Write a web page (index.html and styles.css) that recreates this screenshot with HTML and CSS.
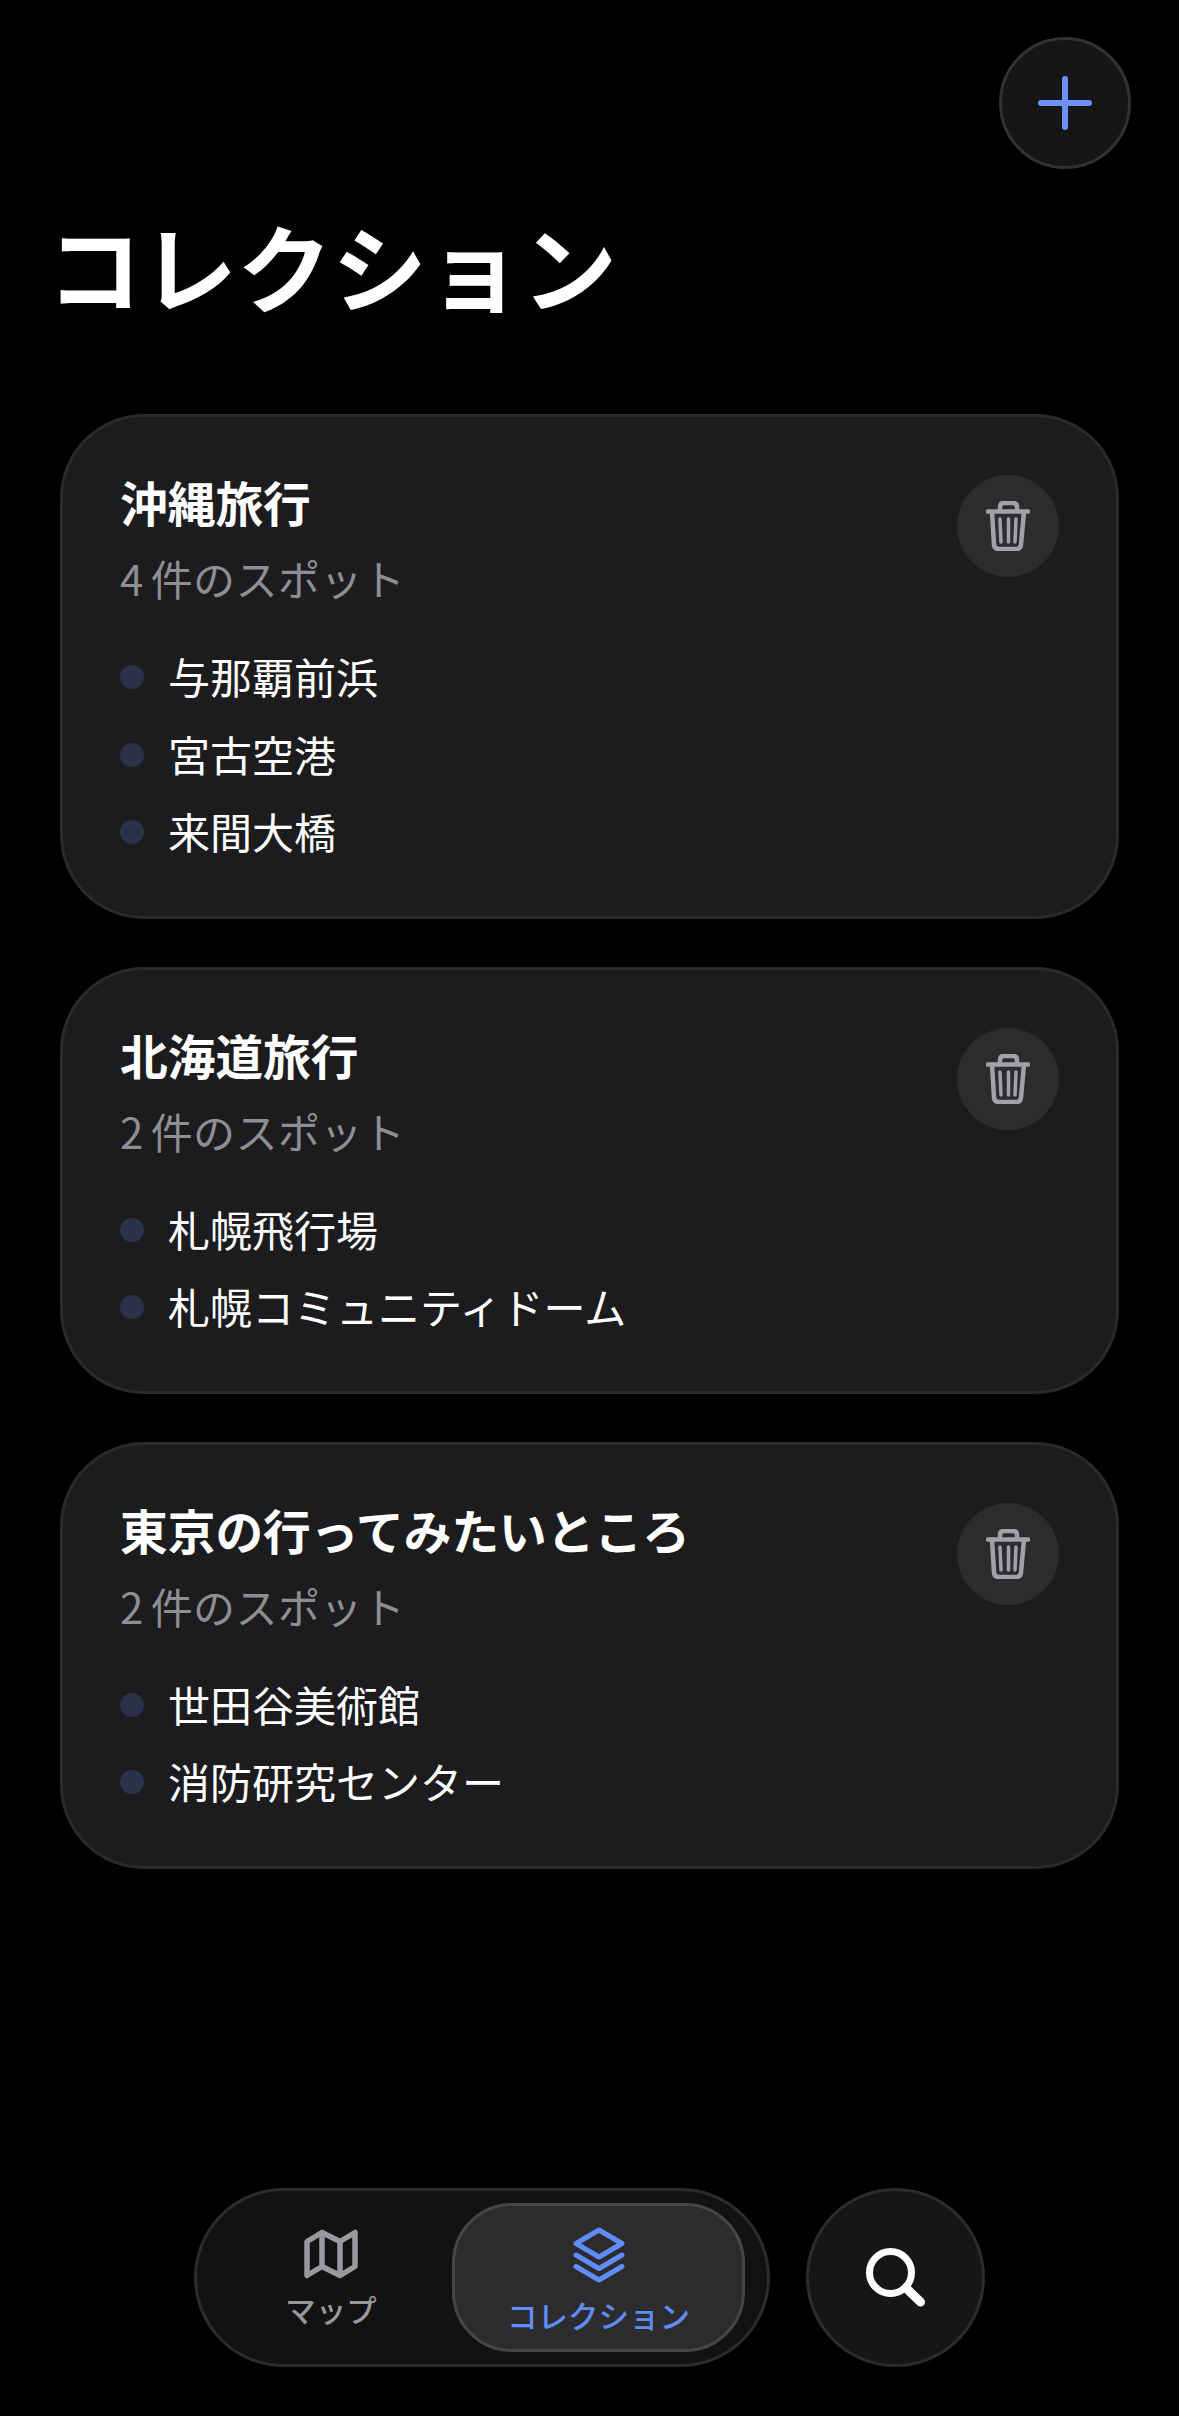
FILE: index.html
```html
<!DOCTYPE html>
<html lang="ja">
<head>
<meta charset="utf-8">
<title>コレクション</title>
<link rel="stylesheet" href="styles.css">
</head>
<body>
<svg class="defs" width="0" height="0" aria-hidden="true">
  <symbol id="trash" viewBox="0 0 44 50">
    <path d="M2 10.500H42M14 10.500V6Q14 2 18 2H27Q31 2 31 6V10.500M6 10.500L8 43.500Q8.300 48 13 48H30Q34.700 48 35 43.500L38 10.500" fill="none" stroke="currentColor" stroke-width="4.500" stroke-linecap="round" stroke-linejoin="round"/>
    <path d="M14 18L15 41M22.500 18V41M30 18L29 41" fill="none" stroke="currentColor" stroke-width="3.500" stroke-linecap="round"/>
  </symbol>
</svg>
<main class="page">
  <header class="top">
    <button class="add" type="button" aria-label="追加">
      <svg class="add-icon" viewBox="0 0 54 54"><path d="M27 3V51M3 27H51" fill="none" stroke="currentColor" stroke-width="6" stroke-linecap="round"/></svg>
    </button>
  </header>
  <h1 class="title">コレクション</h1>
  <section class="list">
    <article class="card">
      <div class="card-head">
        <div>
          <h2 class="name">沖縄旅行</h2>
          <p class="count"><span class="num">4</span>件のスポット</p>
        </div>
        <button class="trash" type="button" aria-label="削除"><svg class="trash-icon"><use href="#trash"/></svg></button>
      </div>
      <ul class="spots">
        <li class="spot">与那覇前浜</li>
        <li class="spot">宮古空港</li>
        <li class="spot">来間大橋</li>
      </ul>
    </article>
    <article class="card">
      <div class="card-head">
        <div>
          <h2 class="name">北海道旅行</h2>
          <p class="count"><span class="num">2</span>件のスポット</p>
        </div>
        <button class="trash" type="button" aria-label="削除"><svg class="trash-icon"><use href="#trash"/></svg></button>
      </div>
      <ul class="spots">
        <li class="spot">札幌飛行場</li>
        <li class="spot">札幌コミュニティドーム</li>
      </ul>
    </article>
    <article class="card">
      <div class="card-head">
        <div>
          <h2 class="name">東京の行ってみたいところ</h2>
          <p class="count"><span class="num">2</span>件のスポット</p>
        </div>
        <button class="trash" type="button" aria-label="削除"><svg class="trash-icon"><use href="#trash"/></svg></button>
      </div>
      <ul class="spots">
        <li class="spot">世田谷美術館</li>
        <li class="spot">消防研究センター</li>
      </ul>
    </article>
  </section>
  <nav class="nav">
    <div class="tabs">
      <div class="tab tab-plain">
        <svg class="tab-icon" viewBox="0 0 54 50"><path d="M3 12.500L18 3.500L36 12.500L51 3.500V37.500L36 46.500L18 37.500L3 46.500ZM18 3.500V37.500M36 12.500V46.500" fill="none" stroke="currentColor" stroke-width="5.500" stroke-linejoin="round" stroke-linecap="round"/></svg>
        <span class="tab-label">マップ</span>
      </div>
      <div class="tab tab-active">
        <svg class="tab-icon tab-icon-stack" viewBox="0 0 54 56"><path d="M27 3L50 16.500L27 30L4 16.500Z" fill="none" stroke="currentColor" stroke-width="5" stroke-linejoin="round"/><path d="M4 28L27 41.500L50 28M4 39.500L27 53L50 39.500" fill="none" stroke="currentColor" stroke-width="5" stroke-linecap="round" stroke-linejoin="round"/></svg>
        <span class="tab-label">コレクション</span>
      </div>
    </div>
    <button class="search" type="button" aria-label="検索">
      <svg class="search-icon" viewBox="0 0 60 60"><circle cx="24.500" cy="24.500" r="21" fill="none" stroke="currentColor" stroke-width="7"/><path d="M40 40L54.500 54" fill="none" stroke="currentColor" stroke-width="9" stroke-linecap="round"/></svg>
    </button>
  </nav>
</main>
</body>
</html>
```
FILE: styles.css
```css
* { box-sizing: border-box; }
html, body { margin: 0; padding: 0; background: #000; }
body { font-family: "Noto Sans CJK JP", "Noto Sans", sans-serif; color: #fff; }
.defs { position: absolute; }
.page { height: 2416px; display: flex; flex-direction: column; padding: 37px 48px 49px 60px; overflow: hidden; }
.top { display: flex; justify-content: flex-end; }
.add { width: 132px; height: 132px; border-radius: 50%; background: #161617; border: 3px solid #323234; padding: 0; display: flex; align-items: center; justify-content: center; color: #6b92fb; }
.add-icon { width: 54px; height: 54px; display: block; }
.title { margin: 26px 0 0 -13px; font-size: 95px; line-height: 140px; font-weight: 700; }
.list { margin: 79px 12px 0 0; display: flex; flex-direction: column; gap: 48px; }
.card { background: #1c1c1e; border: 3px solid #2a2a2c; border-radius: 84px; padding: 55px 57px 46px 57px; }
.card-head { display: flex; justify-content: space-between; align-items: flex-start; }
.name { margin: 0; font-size: 47.700px; line-height: 60px; font-weight: 700; }
.count { margin: 16px 0 0; font-size: 42px; line-height: 60px; color: #8e8e93; font-weight: 400; letter-spacing: 0.4px; }
.num { margin-right: 7px; }
.trash { width: 102px; height: 102px; margin-top: 3px; border-radius: 50%; background: #2c2c2e; border: 0; padding: 0; display: flex; align-items: center; justify-content: center; color: #a1a1a6; }
.trash-icon { width: 44px; height: 50px; display: block; }
.spots { list-style: none; margin: 29px 0 0; padding: 0; display: flex; flex-direction: column; }
.spot { display: flex; align-items: center; gap: 24px; font-size: 42px; line-height: 77.5px; height: 77.5px; }
.spot::before { content: ""; width: 24px; height: 24px; margin-top: 3px; border-radius: 50%; background: #2a3149; flex: none; }
.nav { margin: auto -48px 0 -60px; display: flex; justify-content: center; gap: 36px; }
.tabs { width: 576px; height: 179px; border-radius: 90px; background: #121213; border: 3px solid #2c2c2e; display: flex; align-items: center; padding: 0 22px 0 36px; justify-content: space-between; }
.tab { display: flex; flex-direction: column; align-items: center; color: #98989d; width: 196px; }
.tab-plain { padding-top: 4px; }
.tab-active { width: 293px; height: 149px; border-radius: 60px; background: #2c2c2e; border: 3px solid #464648; color: #5f8cf6; justify-content: center; padding-top: 8px; }
.tab-icon { width: 54px; height: 50px; display: block; }
.tab-icon-stack { height: 56px; }
.tab-label { font-size: 30.500px; line-height: 42px; font-weight: 500; margin-top: 9px; }
.tab-active .tab-label { margin-top: 11px; }
.search { width: 179px; height: 179px; border-radius: 50%; background: #161617; border: 3px solid #2c2c2e; padding: 0; display: flex; align-items: center; justify-content: center; color: #fff; }
.search-icon { width: 60px; height: 60px; display: block; }
```
